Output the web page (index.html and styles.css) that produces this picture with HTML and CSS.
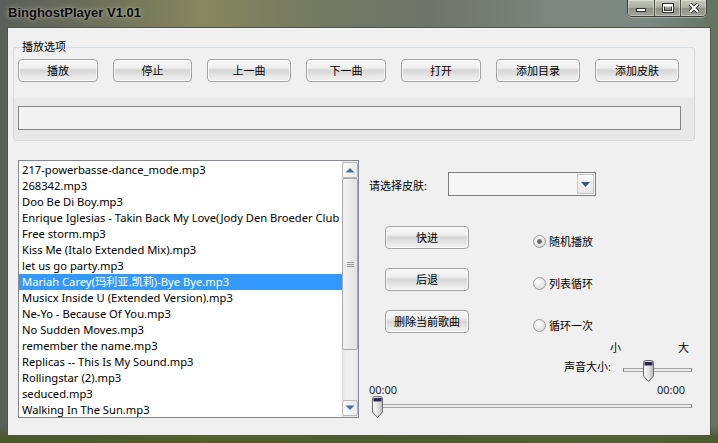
FILE: index.html
```html
<!DOCTYPE html>
<html lang="zh-CN">
<head>
<meta charset="utf-8">
<title>BinghostPlayer V1.01</title>
<link rel="stylesheet" href="styles.css">
</head>
<body>
<div class="window">
  <div class="titlebar">
    <span class="title">BinghostPlayer V1.01</span>
    <div class="caption-btns">
      <span class="cb">
        <svg width="12" height="10" viewBox="0 0 12 10"><rect x="1.5" y="5.5" width="9" height="3" fill="#fff" stroke="#2f3329" stroke-width="1"/></svg>
      </span>
      <span class="cb">
        <svg width="12" height="10" viewBox="0 0 12 10"><rect x="1.5" y="1.5" width="9" height="7" fill="none" stroke="#2f3329" stroke-width="3"/><rect x="1.5" y="1.5" width="9" height="7" fill="none" stroke="#fff" stroke-width="1"/><rect x="2" y="2" width="8" height="1.5" fill="#fff"/></svg>
      </span>
      <span class="cb">
        <svg width="12" height="10" viewBox="0 0 12 10"><path d="M2 1 L10 9 M10 1 L2 9" stroke="#2f3329" stroke-width="4"/><path d="M2 1 L10 9 M10 1 L2 9" stroke="#fff" stroke-width="2"/></svg>
      </span>
    </div>
  </div>

  <div class="client">
    <div class="group">
      <div class="legend">播放选项</div>
      <div class="btn-row">
        <button class="btn">播放</button>
        <button class="btn">停止</button>
        <button class="btn">上一曲</button>
        <button class="btn">下一曲</button>
        <button class="btn">打开</button>
        <button class="btn">添加目录</button>
        <button class="btn">添加皮肤</button>
      </div>
      <div class="status-panel"><div class="status-box"></div></div>
    </div>

    <div class="main">
      <div class="listbox">
        <ul class="items">
          <li>217-powerbasse-dance_mode.mp3</li>
          <li>268342.mp3</li>
          <li>Doo Be Di Boy.mp3</li>
          <li>Enrique Iglesias - Takin Back My Love(Jody Den Broeder Club</li>
          <li>Free storm.mp3</li>
          <li>Kiss Me (Italo Extended Mix).mp3</li>
          <li>let us go party.mp3</li>
          <li class="selected">Mariah Carey(玛利亚.凯莉)-Bye Bye.mp3</li>
          <li>Musicx Inside U (Extended Version).mp3</li>
          <li>Ne-Yo - Because Of You.mp3</li>
          <li>No Sudden Moves.mp3</li>
          <li>remember the name.mp3</li>
          <li>Replicas -- This Is My Sound.mp3</li>
          <li>Rollingstar (2).mp3</li>
          <li>seduced.mp3</li>
          <li>Walking In The Sun.mp3</li>
        </ul>
        <div class="vscroll">
          <div class="sb-btn"><svg width="10" height="6" viewBox="0 0 10 6"><path d="M0.5 5.5 L5 1 L9.5 5.5 Z" fill="#4f6f97"/></svg></div>
          <div class="sb-thumb"><span class="grip"></span></div>
          <div class="sb-track"></div>
          <div class="sb-btn"><svg width="10" height="6" viewBox="0 0 10 6"><path d="M0.5 0.5 L5 5 L9.5 0.5 Z" fill="#4f6f97"/></svg></div>
        </div>
      </div>

      <div class="side">
        <div class="skin-row">
          <span class="skin-label">请选择皮肤:</span>
          <div class="combo">
            <div class="combo-btn"><svg width="9" height="5" viewBox="0 0 9 5"><path d="M0 0 H9 L4.5 5 Z" fill="#3a5a86"/></svg></div>
          </div>
        </div>

        <div class="ctrl-grid">
          <button class="btn">快进</button>
          <label class="radio"><span class="radio-dot checked"></span>随机播放</label>
          <button class="btn">后退</button>
          <label class="radio"><span class="radio-dot"></span>列表循环</label>
          <button class="btn">删除当前歌曲</button>
          <label class="radio"><span class="radio-dot"></span>循环一次</label>
        </div>

        <div class="vol-scale"><span>小</span><span>大</span></div>
        <div class="vol-row">
          <span class="vol-label">声音大小:</span>
          <div class="slider vol-slider">
            <div class="track"></div>
            <svg class="thumb" style="left:20px" width="11" height="22" viewBox="0 0 11 22"><defs><linearGradient id="tg1" x1="0" x2="1" y1="0" y2="0"><stop offset="0" stop-color="#fbfbfb"/><stop offset="0.5" stop-color="#e4e4e4"/><stop offset="1" stop-color="#b9b9b9"/></linearGradient></defs><path d="M0.5 3 Q0.5 0.5 3 0.5 H8 Q10.5 0.5 10.5 3 V16 L5.5 21.5 L0.5 16 Z" fill="url(#tg1)" stroke="#6a6a6a"/><rect x="1.5" y="2" width="8" height="3" fill="#2b2756"/><rect x="1.5" y="5" width="8" height="1" fill="#8c8aa8"/></svg>
          </div>
        </div>

        <div class="time-row"><span>00:00</span><span>00:00</span></div>
        <div class="slider seek-slider">
          <div class="track"></div>
          <svg class="thumb" style="left:0px" width="11" height="22" viewBox="0 0 11 22"><defs><linearGradient id="tg2" x1="0" x2="1" y1="0" y2="0"><stop offset="0" stop-color="#fbfbfb"/><stop offset="0.5" stop-color="#e4e4e4"/><stop offset="1" stop-color="#b9b9b9"/></linearGradient></defs><path d="M0.5 3 Q0.5 0.5 3 0.5 H8 Q10.5 0.5 10.5 3 V16 L5.5 21.5 L0.5 16 Z" fill="url(#tg2)" stroke="#6a6a6a"/><rect x="1.5" y="2" width="8" height="3" fill="#2b2756"/><rect x="1.5" y="5" width="8" height="1" fill="#8c8aa8"/></svg>
        </div>
      </div>
    </div>
  </div>
</div>
</body>
</html>
```

FILE: styles.css
```css
* { box-sizing: border-box; }
html, body { margin: 0; padding: 0; }
body {
  width: 718px;
  height: 443px;
  overflow: hidden;
  font-family: "Noto Sans", "Noto Sans CJK SC", sans-serif;
  font-size: 12px;
  color: #000;
}

.window {
  width: 718px;
  height: 443px;
  display: flex;
  flex-direction: column;
  padding: 0 7px 7px 7px;
  background:
    linear-gradient(180deg, rgba(0,0,0,0) 0, rgba(0,0,0,0) 425px, rgba(70,85,30,0.8) 438px),
    linear-gradient(90deg, #5a5e58 0%, #6a6d5a 12%, #86875c 28%, #737862 45%, #6e7469 60%, #7f8680 78%, #7c8884 90%, #64735f 100%);
}

.titlebar {
  height: 27px;
  flex: none;
  display: flex;
  justify-content: space-between;
  align-items: flex-start;
}
.title {
  font-family: "Liberation Sans", "DejaVu Sans", sans-serif;
  font-weight: bold;
  font-size: 13px;
  line-height: 15px;
  margin: 5px 0 0 1px;
  color: #0a0a0a;
  text-shadow: 0 0 6px rgba(235,235,220,0.55), 0 0 2px rgba(235,235,220,0.45);
}
.caption-btns {
  display: flex;
  height: 17px;
  margin-right: 4px;
  border: 1px solid #3a3f35;
  border-top: none;
  border-radius: 0 0 5px 5px;
  overflow: hidden;
  box-shadow: 0 1px 0 rgba(255,255,255,0.35);
}
.cb {
  width: 26px;
  height: 100%;
  display: flex;
  align-items: center;
  justify-content: center;
  background: linear-gradient(180deg, #c5c9bd 0%, #aeb2a5 45%, #8e9386 52%, #9ea497 100%);
  box-shadow: inset 0 0 0 1px rgba(255,255,255,0.35);
}
.cb + .cb { border-left: 1px solid #4a4f44; }

.client {
  flex: 1;
  background: #f0f0f0;
  border: 1px solid #4f5547;
  display: flex;
  flex-direction: column;
}

/* group box */
.group {
  margin: 19px 0 0 5px;
  width: 682px;
  border: 1px solid #d3d9dd;
  border-radius: 3px;
}
.legend {
  width: fit-content;
  margin: -8px 0 0 6px;
  padding: 0 2px;
  background: #f0f0f0;
  font-size: 11px;
  line-height: 14px;
}
.btn-row {
  margin: 5px 0 0 4px;
  display: grid;
  grid-template-columns: 80px 79px 84px 80px 80px 84px 84px;
  column-gap: 15px;
}
.btn {
  height: 23px;
  padding: 0;
  font-family: "Noto Sans CJK SC", sans-serif;
  font-size: 11px;
  line-height: 21px;
  color: #000;
  border: 1px solid #a3a3a3;
  border-radius: 4px;
  background: linear-gradient(180deg, #f7f7f7 0%, #f0f0f0 35%, #d6d6d6 50%, #dcdcdc 60%, #ececec 85%, #f0f0f0 100%);
  box-shadow: inset 0 0 0 1px rgba(255,255,255,0.7);
}
.status-panel {
  margin-top: 16px;
  height: 42px;
  padding: 8px 0 0 4px;
  background: #e8e8e8;
}
.status-box {
  width: 663px;
  height: 24px;
  border: 1px solid #848484;
  background: #f3f3f3;
}

/* main area */
.main {
  margin: 19px 0 0 10px;
  display: flex;
  align-items: flex-start;
}
.listbox {
  width: 341px;
  height: 258px;
  border: 1px solid #828790;
  background: #fff;
  display: flex;
}
.items {
  list-style: none;
  margin: 0;
  padding: 1px 0 0 0;
  flex: 1;
  min-width: 0;
  overflow: hidden;
}
.items li {
  height: 16px;
  line-height: 16px;
  padding-left: 3px;
  white-space: nowrap;
  overflow: hidden;
  font-size: 11.2px;
}
.items li.selected {
  background: #3399ff;
  color: #fff;
}
.vscroll {
  width: 16px;
  flex: none;
  padding: 1px 0;
  display: flex;
  flex-direction: column;
  background: linear-gradient(90deg, #e4e4e4 0%, #eeeeee 30%, #eeeeee 70%, #e4e4e4 100%);
}
.sb-btn {
  height: 16px;
  flex: none;
  border: 1px solid #b8b8b8;
  border-radius: 2px;
  background: linear-gradient(90deg, #fbfbfb, #e8e8e8);
  display: flex;
  align-items: center;
  justify-content: center;
}
.sb-thumb {
  height: 172px;
  flex: none;
  border: 1px solid #a8a8a8;
  border-radius: 2px;
  background: linear-gradient(90deg, #f2f2f2, #e2e2e2);
  display: flex;
  align-items: center;
  justify-content: center;
}
.grip {
  width: 7px;
  height: 5px;
  border-top: 1px solid #9a9a9a;
  border-bottom: 1px solid #9a9a9a;
  background: linear-gradient(180deg, transparent 1px, #9a9a9a 1px, #9a9a9a 2px, transparent 2px);
}
.sb-track { flex: 1; }

/* side panel */
.side {
  flex: 1;
  padding-left: 10px;
  display: flex;
  flex-direction: column;
  align-items: flex-start;
}
.skin-row {
  margin-top: 12px;
  height: 24px;
  display: flex;
  align-items: center;
}
.skin-label {
  width: 79px;
  font-size: 11px;
  line-height: 14px;
  padding-top: 3px;
}
.combo {
  width: 148px;
  height: 24px;
  border: 1px solid #7d7d7d;
  background: #f5f5f5;
  display: flex;
  justify-content: flex-end;
  padding: 1px;
}
.combo-btn {
  width: 17px;
  height: 20px;
  border: 1px solid #c6c6c6;
  background: linear-gradient(180deg, #fbfbfb, #e6e6e6);
  display: flex;
  align-items: center;
  justify-content: center;
}

.ctrl-grid {
  margin: 30px 0 0 16px;
  display: grid;
  grid-template-columns: 84px auto;
  column-gap: 64px;
  row-gap: 19px;
}
.radio {
  display: flex;
  align-items: center;
  gap: 3px;
  padding-top: 8px;
  height: 23px;
  font-size: 11px;
  line-height: 13px;
  align-self: start;
}
.radio-dot {
  width: 13px;
  height: 13px;
  border-radius: 50%;
  border: 1px solid #9a9a9a;
  background: radial-gradient(circle at 40% 35%, #ffffff 0%, #e6e6e6 55%, #cfcfcf 100%);
}
.radio-dot.checked {
  background:
    radial-gradient(circle at 50% 50%, #5a5a5a 0, #7a7a7a 2px, rgba(0,0,0,0) 3px),
    radial-gradient(circle at 40% 35%, #ffffff 0%, #e6e6e6 55%, #cfcfcf 100%);
}

.vol-scale {
  margin: 8px 0 0 241px;
  display: flex;
  gap: 57px;
  font-size: 11px;
  line-height: 14px;
}
.vol-row {
  margin: 5px 0 0 195px;
  display: flex;
  align-items: flex-start;
}
.vol-label {
  font-size: 11px;
  line-height: 13px;
  width: 47px;
  white-space: nowrap;
}
.slider {
  position: relative;
  height: 22px;
}
.vol-slider {
  width: 69px;
  margin-left: 12px;
}
.track {
  position: absolute;
  left: 0;
  right: 0;
  top: 8px;
  height: 4px;
  border: 1px solid #a4a4a4;
  border-left-color: #d040d0;
  border-right-color: #d040d0;
  background: #ececec;
}
.thumb {
  position: absolute;
  top: 0;
}
.time-row {
  margin-top: 1px;
  width: 316px;
  display: flex;
  justify-content: space-between;
  font-size: 11px;
  line-height: 14px;
  color: #1e1e1e;
}
.seek-slider {
  margin: -1px 0 0 3px;
  width: 320px;
}
```
